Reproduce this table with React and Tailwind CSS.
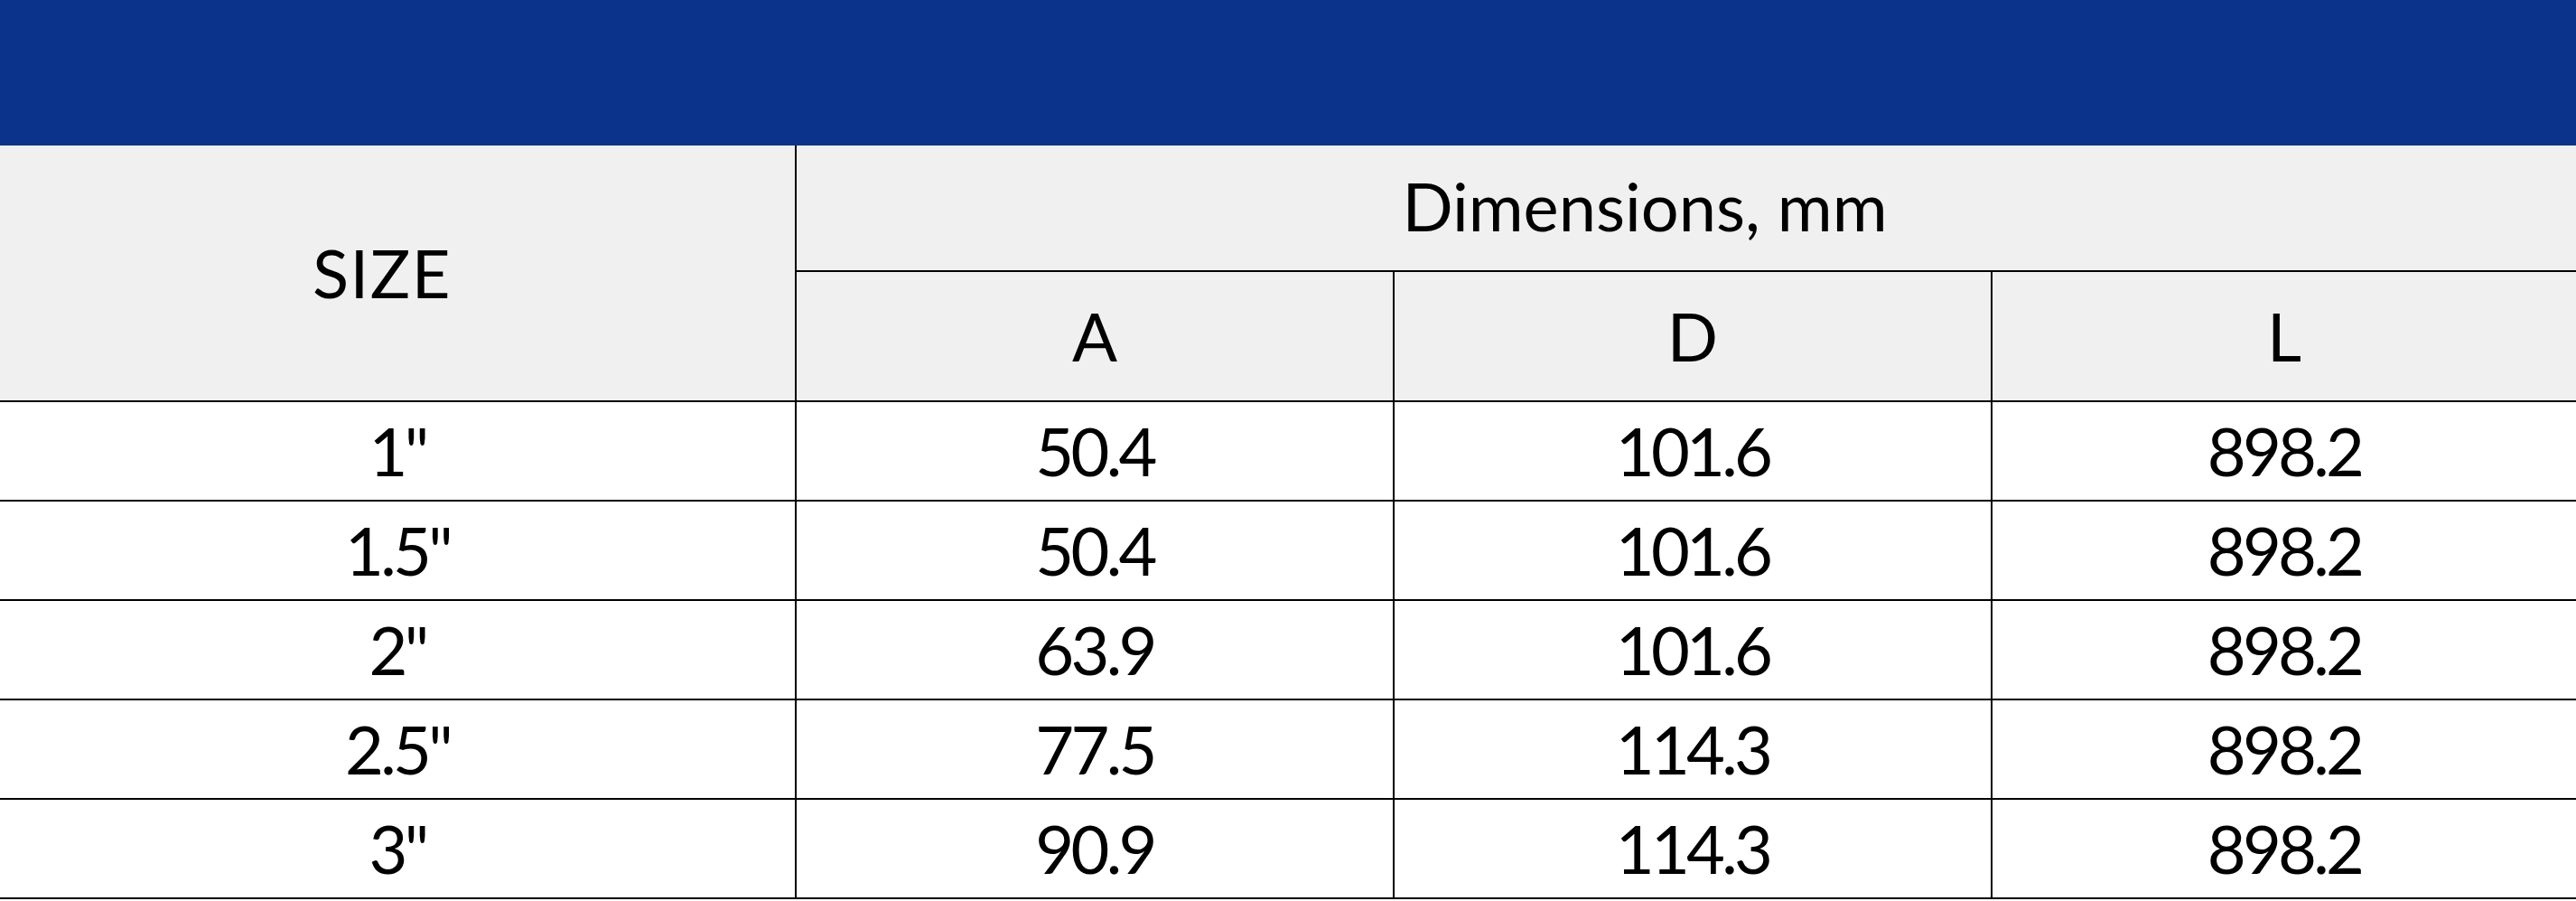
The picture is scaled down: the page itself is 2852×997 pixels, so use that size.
const rows = [
  { size: '1"', a: '50.4', d: '101.6', l: '898.2' },
  { size: '1.5"', a: '50.4', d: '101.6', l: '898.2' },
  { size: '2"', a: '63.9', d: '101.6', l: '898.2' },
  { size: '2.5"', a: '77.5', d: '114.3', l: '898.2' },
  { size: '3"', a: '90.9', d: '114.3', l: '898.2' },
]

// Spec table: blue banner + dimensions grid
export default function App() {
  return (
    <div className="w-[2852px] h-[997px] bg-white text-black font-['Lato',sans-serif] text-[74px] leading-none overflow-hidden">
      <div className="h-[161px] bg-[#0b338b]" />

      <div className="grid grid-cols-[882px_662px_662px_1fr]">
        {/* header */}
        <div className="row-span-2 bg-[#f0f0f0] border-r-2 border-b-2 border-black flex items-center justify-center pr-[34px] tracking-[0.02em]">
          SIZE
        </div>
        <div className="col-span-3 h-[140px] bg-[#f0f0f0] border-b-2 border-black flex items-center justify-center pr-[92px] pb-[4px]">
          Dimensions, mm
        </div>
        <div className="h-[144px] bg-[#f0f0f0] border-r-2 border-b-2 border-black flex items-center justify-center">A</div>
        <div className="h-[144px] bg-[#f0f0f0] border-r-2 border-b-2 border-black flex items-center justify-center">D</div>
        <div className="h-[144px] bg-[#f0f0f0] border-b-2 border-black flex items-center justify-center">L</div>

        {/* data rows */}
        {rows.map((r) => (
          <div key={r.size} className="contents tracking-[-0.05em]">
            <div className="h-[110px] border-r-2 border-b-2 border-black flex items-center justify-center">{r.size}</div>
            <div className="h-[110px] border-r-2 border-b-2 border-black flex items-center justify-center">{r.a}</div>
            <div className="h-[110px] border-r-2 border-b-2 border-black flex items-center justify-center">{r.d}</div>
            <div className="h-[110px] border-b-2 border-black flex items-center justify-center">{r.l}</div>
          </div>
        ))}
      </div>
    </div>
  )
}
